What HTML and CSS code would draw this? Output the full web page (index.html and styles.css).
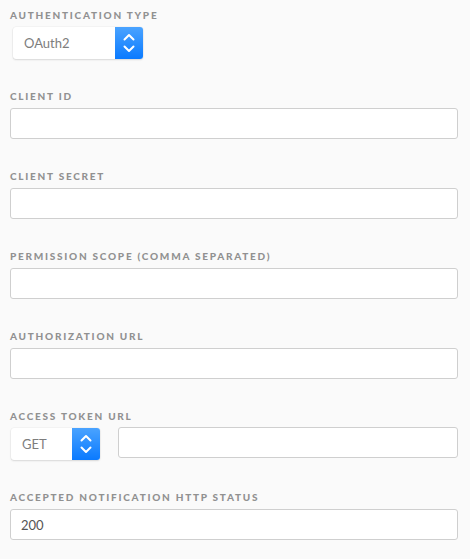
FILE: index.html
```html
<!DOCTYPE html>
<html>
<head>
<meta charset="utf-8">
<link rel="stylesheet" href="styles.css">
</head>
<body>
<form class="form">
  <div class="field">
    <label class="label">Authentication Type</label>
    <div class="select select-auth">
      <span class="select-value">OAuth2</span>
      <span class="select-arrows">
        <svg width="14" height="22" viewBox="0 0 14 22"><path d="M2.5 7.5 L7 3 L11.5 7.5 M2.5 14.5 L7 19 L11.5 14.5" fill="none" stroke="#fff" stroke-width="2" stroke-linecap="round" stroke-linejoin="round"/></svg>
      </span>
    </div>
  </div>
  <div class="field">
    <label class="label">Client ID</label>
    <input class="input" type="text">
  </div>
  <div class="field">
    <label class="label">Client Secret</label>
    <input class="input" type="text">
  </div>
  <div class="field">
    <label class="label">Permission Scope (comma separated)</label>
    <input class="input" type="text">
  </div>
  <div class="field">
    <label class="label">Authorization URL</label>
    <input class="input" type="text">
  </div>
  <div class="field">
    <label class="label">Access Token URL</label>
    <div class="row">
      <div class="select select-method">
        <span class="select-value">GET</span>
        <span class="select-arrows">
          <svg width="14" height="22" viewBox="0 0 14 22"><path d="M2.5 7.5 L7 3 L11.5 7.5 M2.5 14.5 L7 19 L11.5 14.5" fill="none" stroke="#fff" stroke-width="2" stroke-linecap="round" stroke-linejoin="round"/></svg>
        </span>
      </div>
      <input class="input input-grow" type="text">
    </div>
  </div>
  <div class="field">
    <label class="label">Accepted Notification HTTP Status</label>
    <input class="input" type="text" value="200">
  </div>
</form>
</body>
</html>
```
FILE: styles.css
```css
* { box-sizing: border-box; }
html, body {
  margin: 0;
  padding: 0;
  background: #fafafa;
  font-family: "Lato", "Open Sans", sans-serif;
}
.form {
  display: flex;
  flex-direction: column;
  gap: 30px;
  padding: 8px 12px 0 10px;
}
.field {
  display: flex;
  flex-direction: column;
  align-items: stretch;
}
.label {
  display: block;
  font-size: 10px;
  line-height: 14px;
  font-weight: 900;
  letter-spacing: 1.75px;
  text-transform: uppercase;
  color: #919191;
  margin-bottom: 5px;
}
.input {
  display: block;
  width: 100%;
  height: 31px;
  border: 1px solid #cfcfcf;
  border-radius: 3px;
  background: #fff;
  padding: 0 10px;
  font-family: "Lato", "Open Sans", sans-serif;
  font-size: 13px;
  color: #555;
  outline: none;
}
.select {
  display: flex;
  align-items: stretch;
  height: 32px;
  background: #fff;
  border-radius: 3px;
  box-shadow: 0 1px 2px rgba(0,0,0,0.12), 0 0 0 0.5px rgba(0,0,0,0.05);
}
.select-auth {
  width: 130px;
  margin-left: 3px;
}
.select-method {
  width: 89px;
  margin-left: 1px;
  flex: none;
}
.select-value {
  flex: 1;
  display: flex;
  align-items: center;
  padding-left: 11px;
  font-size: 13px;
  color: #7d7d7d;
}
.select-arrows {
  width: 28px;
  display: flex;
  align-items: center;
  justify-content: center;
  background: linear-gradient(#4aa3ff, #0a7aff);
  border-radius: 0 3px 3px 0;
}
.row {
  display: flex;
  align-items: flex-start;
  gap: 18px;
}
.input-grow {
  flex: 1;
  width: auto;
  margin-top: -1px;
}
```
